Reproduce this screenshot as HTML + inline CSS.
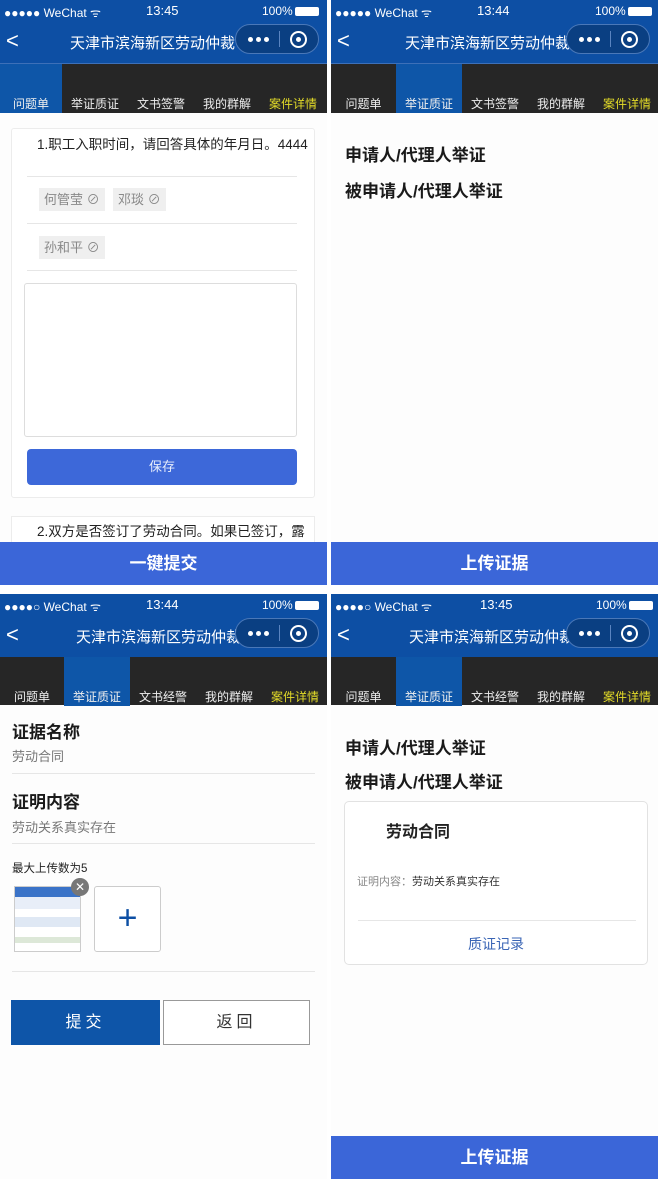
<!DOCTYPE html>
<html><head><meta charset="utf-8">
<style>
*{margin:0;padding:0;box-sizing:border-box}
body{width:658px;height:1179px;background:#fff;position:relative;overflow:hidden;font-family:"Liberation Sans","Noto Sans CJK SC",sans-serif;color:#222}
.p{position:absolute;width:327px;height:585px;overflow:hidden;background:#fdfdfd}
.a{position:absolute}
.sb{position:absolute;left:0;top:0;width:100%;height:22px;background:#0d4fa4;color:#fff;font-size:12px}
.nav{position:absolute;left:0;top:22px;width:100%;height:42px;background:#0d4fa4;color:#fff;border-bottom:1px solid #3d70b8}
.tabs{position:absolute;left:0;top:64px;width:100%;height:49px;background:#262626}
.tab{position:absolute;top:0;width:66px;height:49px;color:#eee;font-size:12px;text-align:center;line-height:12px;padding-top:34px}
.act{background:#0e56a8}
.cap{position:absolute;right:8px;top:2px;width:84px;height:30px;border-radius:15px;background:#0a3f82;border:1px solid #4a78b8}
.dots{position:absolute;left:12px;top:12px;width:22px;height:5px}
.dots i{position:absolute;top:0;width:5px;height:5px;border-radius:50%;background:#fff}
.btm{position:absolute;left:0;bottom:0;width:100%;height:43px;background:#3b66d8;color:#fff;font-weight:bold;font-size:17px;text-align:center;line-height:43px}
.h{font-weight:bold;font-size:17px;color:#1a1a1a;position:absolute}
.line{position:absolute;height:1px;background:#e6e6e6}
.chip{position:absolute;background:#efefef;color:#888;font-size:13px;height:23px;line-height:23px;padding:0 5px}
</style></head><body>

<!-- TOP LEFT -->
<div class="p" style="left:0;top:0">
 <div class="sb"><span class="a" style="left:4px;top:4px">●●●●● WeChat ᯤ</span><span class="a" style="left:146px;top:3px;font-size:13px">13:45</span><span class="a" style="left:262px;top:4px">100%</span><span class="a" style="left:295px;top:7px;width:24px;height:9px;background:#fff;border-radius:2px"></span></div>
 <div class="nav"><span class="a" style="left:6px;top:6px;font-size:22px">&lt;</span><span class="a" style="left:70px;top:10px;font-size:15px">天津市滨海新区劳动仲裁</span>
  <div class="cap"><div class="dots"><i style="left:0"></i><i style="left:8px"></i><i style="left:16px"></i></div><span class="a" style="left:43px;top:6px;width:1px;height:16px;background:#5a84c0"></span><span class="a" style="left:54px;top:6px;width:17px;height:17px;border:2px solid #fff;border-radius:50%"></span><span class="a" style="left:60px;top:12px;width:5px;height:5px;background:#fff;border-radius:50%"></span></div></div>
 <div class="tabs"><div class="tab act" style="left:0;width:62px">问题单</div><div class="tab" style="left:62px">举证质证</div><div class="tab" style="left:128px">文书签警</div><div class="tab" style="left:194px">我的群解</div><div class="tab" style="left:260px;color:#e4dc28">案件详情</div></div>
 <div class="a" style="left:11px;top:128px;width:304px;height:370px;border:1px solid #ececec;background:#fff;border-radius:3px"></div>
 <div class="a" style="left:37px;top:133px;font-size:13.5px">1.职工入职时间，请回答具体的年月日。4444</div>
 <div class="line" style="left:27px;top:176px;width:270px"></div>
 <div class="chip" style="left:39px;top:188px">何管莹 ⊘</div><div class="chip" style="left:113px;top:188px">邓琰 ⊘</div>
 <div class="line" style="left:27px;top:223px;width:270px"></div>
 <div class="chip" style="left:39px;top:236px">孙和平 ⊘</div>
 <div class="line" style="left:27px;top:270px;width:270px"></div>
 <div class="a" style="left:24px;top:283px;width:273px;height:154px;border:1px solid #ddd;border-radius:3px;background:#fff"></div>
 <div class="a" style="left:27px;top:449px;width:270px;height:36px;background:#3d68d9;border-radius:4px;color:#e8eefc;font-size:13px;text-align:center;line-height:36px">保存</div>
 <div class="a" style="left:11px;top:516px;width:304px;height:40px;border:1px solid #ececec;background:#fff"></div>
 <div class="a" style="left:37px;top:520px;font-size:13.5px">2.双方是否签订了劳动合同。如果已签订，露</div>
 <div class="btm">一键提交</div>
</div>

<!-- TOP RIGHT -->
<div class="p" style="left:331px;top:0">
 <div class="sb"><span class="a" style="left:4px;top:4px">●●●●● WeChat ᯤ</span><span class="a" style="left:146px;top:3px;font-size:13px">13:44</span><span class="a" style="left:264px;top:4px">100%</span><span class="a" style="left:297px;top:7px;width:24px;height:9px;background:#fff;border-radius:2px"></span></div>
 <div class="nav"><span class="a" style="left:6px;top:6px;font-size:22px">&lt;</span><span class="a" style="left:74px;top:10px;font-size:15px">天津市滨海新区劳动仲裁</span>
  <div class="cap"><div class="dots"><i style="left:0"></i><i style="left:8px"></i><i style="left:16px"></i></div><span class="a" style="left:43px;top:6px;width:1px;height:16px;background:#5a84c0"></span><span class="a" style="left:54px;top:6px;width:17px;height:17px;border:2px solid #fff;border-radius:50%"></span><span class="a" style="left:60px;top:12px;width:5px;height:5px;background:#fff;border-radius:50%"></span></div></div>
 <div class="tabs"><div class="tab" style="left:0;width:65px">问题单</div><div class="tab act" style="left:65px">举证质证</div><div class="tab" style="left:131px">文书签警</div><div class="tab" style="left:197px">我的群解</div><div class="tab" style="left:263px;color:#e4dc28">案件详情</div></div>
 <div class="h" style="left:14px;top:141px">申请人/代理人举证</div>
 <div class="h" style="left:14px;top:177px">被申请人/代理人举证</div>
 <div class="btm">上传证据</div>
</div>

<!-- BOTTOM LEFT -->
<div class="p" style="left:0;top:594px">
 <div class="sb"><span class="a" style="left:4px;top:4px">●●●●○ WeChat ᯤ</span><span class="a" style="left:146px;top:3px;font-size:13px">13:44</span><span class="a" style="left:262px;top:4px">100%</span><span class="a" style="left:295px;top:7px;width:24px;height:9px;background:#fff;border-radius:2px"></span></div>
 <div class="nav"><span class="a" style="left:6px;top:6px;font-size:22px">&lt;</span><span class="a" style="left:76px;top:10px;font-size:15px">天津市滨海新区劳动仲裁</span>
  <div class="cap"><div class="dots"><i style="left:0"></i><i style="left:8px"></i><i style="left:16px"></i></div><span class="a" style="left:43px;top:6px;width:1px;height:16px;background:#5a84c0"></span><span class="a" style="left:54px;top:6px;width:17px;height:17px;border:2px solid #fff;border-radius:50%"></span><span class="a" style="left:60px;top:12px;width:5px;height:5px;background:#fff;border-radius:50%"></span></div></div>
 <div class="tabs" style="top:63px;height:48px"><div class="tab" style="left:0;width:64px">问题单</div><div class="tab act" style="left:64px">举证质证</div><div class="tab" style="left:130px">文书经警</div><div class="tab" style="left:196px">我的群解</div><div class="tab" style="left:262px;color:#e4dc28">案件详情</div></div>
 <div class="h" style="left:12px;top:124px">证据名称</div>
 <div class="a" style="left:12px;top:152px;font-size:13px;color:#777">劳动合同</div>
 <div class="line" style="left:12px;top:179px;width:303px"></div>
 <div class="h" style="left:12px;top:194px">证明内容</div>
 <div class="a" style="left:12px;top:223px;font-size:13px;color:#777">劳动关系真实存在</div>
 <div class="line" style="left:12px;top:249px;width:303px"></div>
 <div class="a" style="left:12px;top:266px;font-size:11.5px">最大上传数为5</div>
 <div class="a" style="left:14px;top:292px;width:67px;height:66px;border:1px solid #ccc;background:linear-gradient(#3a73c8 0 10px,#e8eef8 10px 22px,#fff 22px 30px,#dfe8f4 30px 40px,#fff 40px 50px,#dde8d8 50px 56px,#fff 56px)"></div>
 <div class="a" style="left:71px;top:284px;width:18px;height:18px;border-radius:50%;background:#777;color:#fff;font-size:12px;text-align:center;line-height:18px">✕</div>
 <div class="a" style="left:94px;top:292px;width:67px;height:66px;border:1px solid #ccc;border-radius:3px;background:#fff;color:#0d4fa4;font-size:34px;text-align:center;line-height:62px;font-weight:300">+</div>
 <div class="line" style="left:12px;top:377px;width:303px"></div>
 <div class="a" style="left:11px;top:406px;width:149px;height:45px;background:#0e55a8;color:#fff;font-size:16px;text-align:center;line-height:45px;letter-spacing:4px">提交</div>
 <div class="a" style="left:163px;top:406px;width:147px;height:45px;border:1px solid #999;color:#333;font-size:16px;text-align:center;line-height:43px;letter-spacing:4px;background:#fff">返回</div>
</div>

<!-- BOTTOM RIGHT -->
<div class="p" style="left:331px;top:594px">
 <div class="sb"><span class="a" style="left:4px;top:4px">●●●●○ WeChat ᯤ</span><span class="a" style="left:149px;top:3px;font-size:13px">13:45</span><span class="a" style="left:265px;top:4px">100%</span><span class="a" style="left:298px;top:7px;width:24px;height:9px;background:#fff;border-radius:2px"></span></div>
 <div class="nav"><span class="a" style="left:6px;top:6px;font-size:22px">&lt;</span><span class="a" style="left:78px;top:10px;font-size:15px">天津市滨海新区劳动仲裁</span>
  <div class="cap"><div class="dots"><i style="left:0"></i><i style="left:8px"></i><i style="left:16px"></i></div><span class="a" style="left:43px;top:6px;width:1px;height:16px;background:#5a84c0"></span><span class="a" style="left:54px;top:6px;width:17px;height:17px;border:2px solid #fff;border-radius:50%"></span><span class="a" style="left:60px;top:12px;width:5px;height:5px;background:#fff;border-radius:50%"></span></div></div>
 <div class="tabs" style="top:63px;height:48px"><div class="tab" style="left:0;width:65px">问题单</div><div class="tab act" style="left:65px">举证质证</div><div class="tab" style="left:131px">文书经警</div><div class="tab" style="left:197px">我的群解</div><div class="tab" style="left:263px;color:#e4dc28">案件详情</div></div>
 <div class="h" style="left:14px;top:140px">申请人/代理人举证</div>
 <div class="h" style="left:14px;top:174px">被申请人/代理人举证</div>
 <div class="a" style="left:13px;top:207px;width:304px;height:164px;border:1px solid #e2e2e2;border-radius:5px;background:#fff"></div>
 <div class="a" style="left:55px;top:224px;font-size:16px;font-weight:bold">劳动合同</div>
 <div class="a" style="left:26px;top:279px;font-size:11px;color:#888">证明内容：<span style="color:#333">劳动关系真实存在</span></div>
 <div class="line" style="left:27px;top:326px;width:278px"></div>
 <div class="a" style="left:13px;top:340px;width:304px;text-align:center;font-size:14px;color:#3a65b5">质证记录</div>
 <div class="btm">上传证据</div>
</div>
</body></html>
